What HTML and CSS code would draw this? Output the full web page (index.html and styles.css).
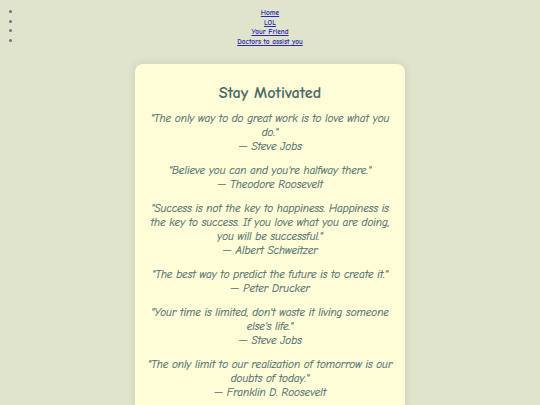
FILE: index.html
```html
<!DOCTYPE html>
<html>
<head>
<meta charset="utf-8">
<title>Stay Motivated</title>
<link rel="stylesheet" href="styles.css">
</head>
<body>
<nav class="nav">
  <ul class="nav-list">
    <li><a href="#">Home</a></li>
    <li><a href="#">LOL</a></li>
    <li><a href="#">Your Friend</a></li>
    <li><a href="#">Doctors to assist you</a></li>
  </ul>
</nav>
<main class="card">
  <h2 class="card-title">Stay Motivated</h2>
  <p class="quote">"The only way to do great work is to love what you do."<br>— Steve Jobs</p>
  <p class="quote">"Believe you can and you're halfway there."<br>— Theodore Roosevelt</p>
  <p class="quote">"Success is not the key to happiness. Happiness is the key to success. If you love what you are doing, you will be successful."<br>— Albert Schweitzer</p>
  <p class="quote">"The best way to predict the future is to create it."<br>— Peter Drucker</p>
  <p class="quote">"Your time is limited, don't waste it living someone else's life."<br>— Steve Jobs</p>
  <p class="quote">"The only limit to our realization of tomorrow is our doubts of today."<br>— Franklin D. Roosevelt</p>
</main>
</body>
</html>
```

FILE: styles.css
```css
html, body {
  background: #e0e4cc;
}
body {
  margin: 8px;
  font-family: "Comic Sans MS", "Comic Neue", "Open Sans", sans-serif;
  color: #557370;
}
.nav-list {
  margin: 0;
  padding: 0 14px;
  list-style: disc outside;
  text-align: center;
  font-size: 7.3px;
  line-height: 9.7px;
  color: #5f7d7a;
}
.nav-list li::marker {
  font-size: 10px;
}
.nav-list a {
  color: #2a2ab0;
  font-weight: 700;
}
.card {
  width: 250px;
  margin: 17px auto 0;
  padding: 10px;
  background: #fffdd8;
  border-radius: 8px;
  box-shadow: 0 0 10px rgba(0, 0, 0, 0.1);
  text-align: center;
}
.card-title {
  margin: 8px 0 8px;
  font-size: 16.3px;
  line-height: 22px;
  color: #4a6a6a;
}
.quote {
  margin: 0 0 10px;
  font-size: 11.1px;
  line-height: 14px;
  font-style: italic;
  color: #527270;
  -webkit-text-stroke: 0.2px #527270;
}
```
